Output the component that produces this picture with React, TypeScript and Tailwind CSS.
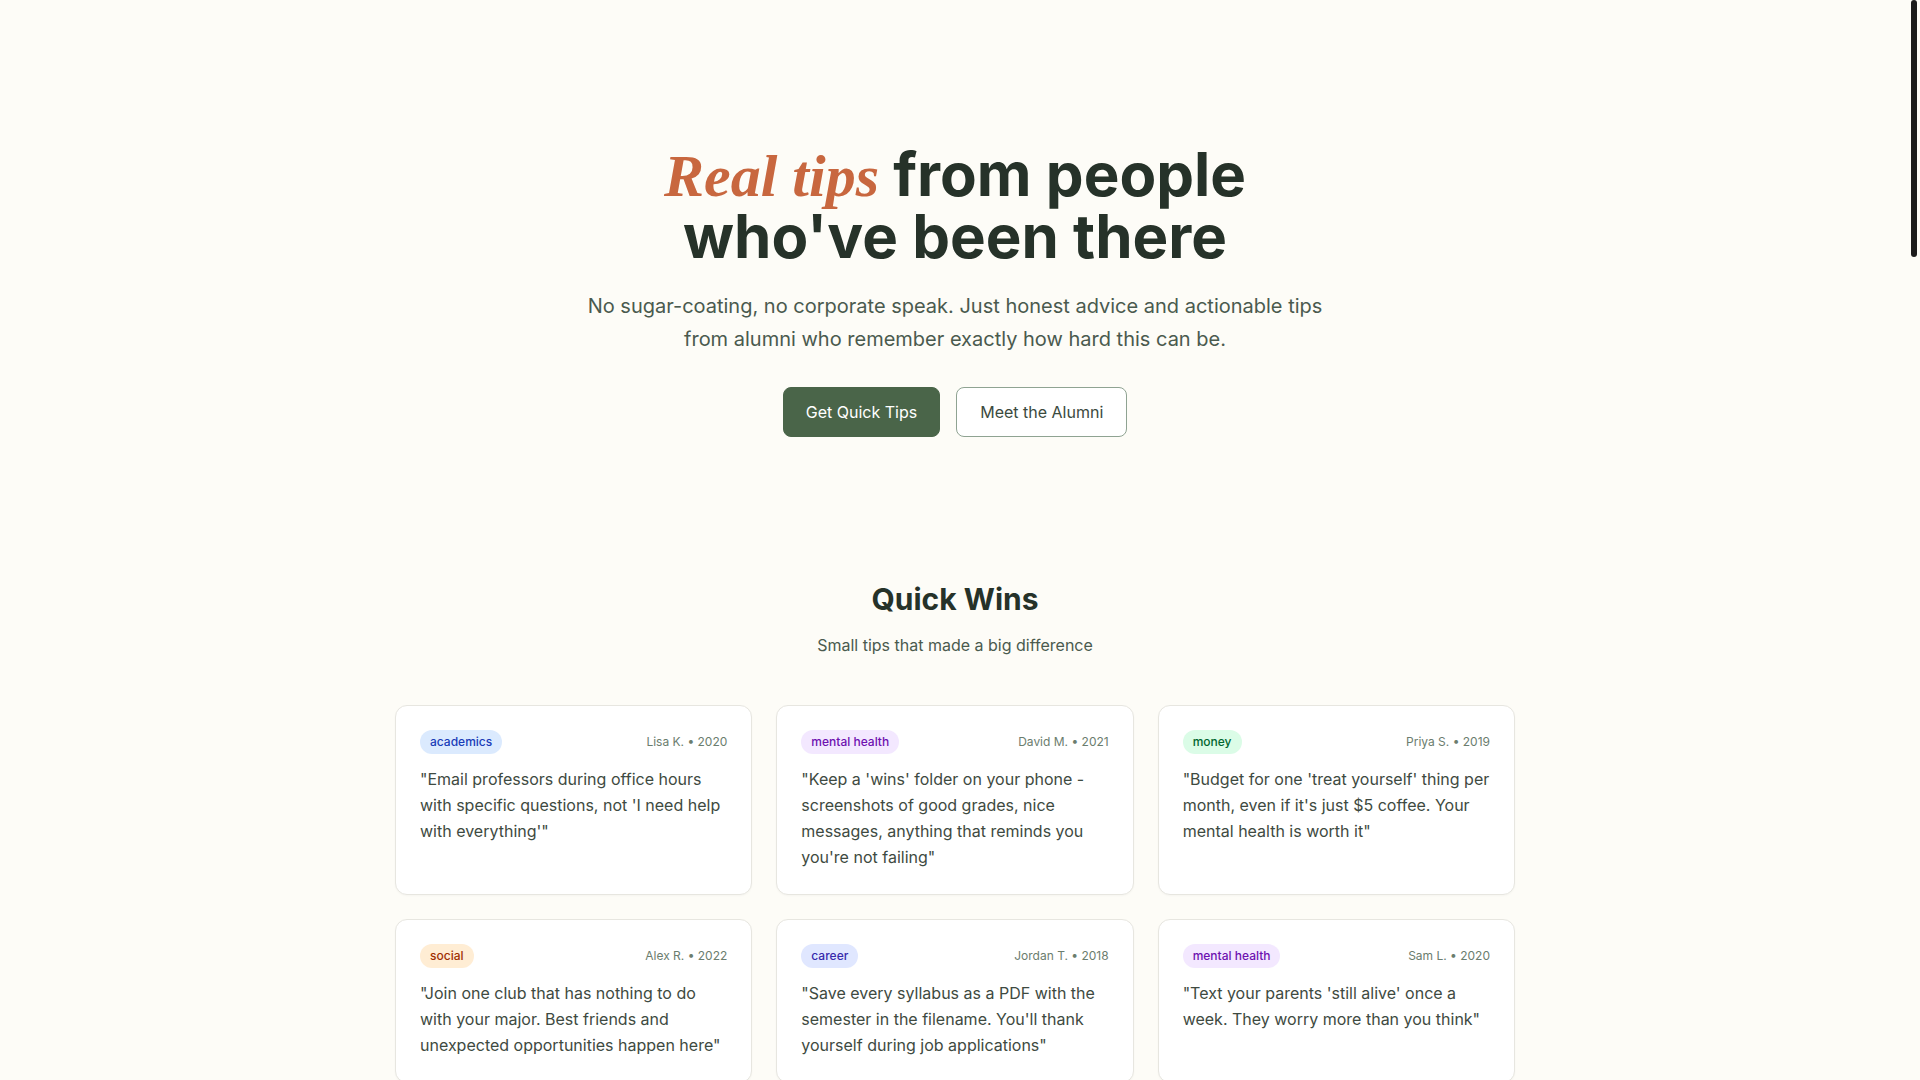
import React from 'react';

type Tip = {
  tag: string;
  author: string;
  year: number;
  text: string;
};

const tagStyles: Record<string, string> = {
  academics: 'bg-blue-100 text-blue-800',
  'mental health': 'bg-purple-100 text-purple-800',
  money: 'bg-green-100 text-green-800',
  social: 'bg-orange-100 text-orange-800',
  career: 'bg-indigo-100 text-indigo-800',
};

const tips: Tip[] = [
  {
    tag: 'academics',
    author: 'Lisa K.',
    year: 2020,
    text: "\"Email professors during office hours with specific questions, not 'I need help with everything'\"",
  },
  {
    tag: 'mental health',
    author: 'David M.',
    year: 2021,
    text: "\"Keep a 'wins' folder on your phone - screenshots of good grades, nice messages, anything that reminds you you're not failing\"",
  },
  {
    tag: 'money',
    author: 'Priya S.',
    year: 2019,
    text: "\"Budget for one 'treat yourself' thing per month, even if it's just $5 coffee. Your mental health is worth it\"",
  },
  {
    tag: 'social',
    author: 'Alex R.',
    year: 2022,
    text: '"Join one club that has nothing to do with your major. Best friends and unexpected opportunities happen here"',
  },
  {
    tag: 'career',
    author: 'Jordan T.',
    year: 2018,
    text: "\"Save every syllabus as a PDF with the semester in the filename. You'll thank yourself during job applications\"",
  },
  {
    tag: 'mental health',
    author: 'Sam L.',
    year: 2020,
    text: "\"Text your parents 'still alive' once a week. They worry more than you think\"",
  },
];

const alumni = [
  { name: 'Lisa K.', role: 'Biology, Class of 2020', blurb: 'Now a research assistant. Failed her first chem exam and lived to tell the tale.' },
  { name: 'David M.', role: 'Computer Science, Class of 2021', blurb: 'Software engineer who learned the hard way that sleep is not optional.' },
  { name: 'Priya S.', role: 'Economics, Class of 2019', blurb: 'Financial analyst and former ramen-only budget expert.' },
  { name: 'Alex R.', role: 'Film Studies, Class of 2022', blurb: 'Freelance editor. Found his people in the hiking club.' },
  { name: 'Jordan T.', role: 'Marketing, Class of 2018', blurb: 'Brand manager who wishes he had kept better records.' },
  { name: 'Sam L.', role: 'Psychology, Class of 2020', blurb: 'Counselor helping students through the same things she went through.' },
];

function TipCard({ tip }: { tip: Tip }) {
  return (
    <div className="bg-white border border-[#e7e6e0] rounded-xl p-6 shadow-[0_1px_2px_rgba(0,0,0,0.03)]">
      <div className="flex items-center justify-between mb-3">
        <span className={`px-2.5 py-1 rounded-full text-xs font-medium ${tagStyles[tip.tag]}`}>{tip.tag}</span>
        <span className="text-xs text-[#6b7d6e]">
          {tip.author} • {tip.year}
        </span>
      </div>
      <p className="text-base leading-relaxed text-[#3e4a41]">{tip.text}</p>
    </div>
  );
}

export default function App() {
  return (
    <div className="min-h-screen pr-[10px] bg-[#fdfcf7] font-['Inter','Liberation_Sans',sans-serif] text-[#263229]">
      {/* scrollbar as drawn in the screenshot */}
      <div className="fixed top-0 right-0 w-[10px] h-screen bg-[#fdfcf7]">
        <div className="ml-[1px] w-[6px] h-[257px] rounded-full bg-[#1c1c1c]" />
      </div>

      <section className="px-4 pt-36 pb-20 text-center">
        <div className="max-w-4xl mx-auto">
          <h1 className="text-6xl font-bold leading-none text-[#263229] mb-6">
            <span className="font-['Liberation_Serif','Times_New_Roman',serif] italic text-[#c8673f]">Real tips</span> from people
            <br />
            who've been there
          </h1>
          <p className="text-xl leading-relaxed text-[#4a5a4e] max-w-3xl mx-auto mb-8">
            No sugar-coating, no corporate speak. Just honest advice and actionable tips from alumni who remember exactly how hard this can be.
          </p>
          <div className="flex justify-center gap-4">
            <button className="px-[22px] py-3 rounded-lg bg-[#4a6549] text-white text-base border border-[#4a6549]">Get Quick Tips</button>
            <button className="px-[23px] py-3 rounded-lg bg-white text-[#3b4a3e] text-base border border-[#8fa392]">Meet the Alumni</button>
          </div>
        </div>
      </section>

      <section className="pt-16 pb-20">
        <div className="max-w-6xl mx-auto px-4">
          <h2 className="text-3xl font-bold text-center text-[#263229] mb-4">Quick Wins</h2>
          <p className="text-base text-center text-[#4a5a4e] mb-12">Small tips that made a big difference</p>
          <div className="grid grid-cols-3 gap-6">
            {tips.map((tip) => (
              <TipCard key={tip.author} tip={tip} />
            ))}
          </div>
        </div>
      </section>

      <section className="py-20">
        <div className="max-w-6xl mx-auto px-4">
          <h2 className="text-3xl font-bold text-center mb-4">Meet the Alumni</h2>
          <p className="text-base text-center text-[#4a5a4e] mb-12">The people behind the advice</p>
          <div className="grid grid-cols-3 gap-6">
            {alumni.map((a) => (
              <div key={a.name} className="bg-white border border-[#e7e6e0] rounded-xl p-6">
                <div className="flex items-center gap-4 mb-4">
                  <div className="w-14 h-14 rounded-full bg-[#e4ebe3] flex items-center justify-center text-lg font-semibold text-[#4a6549]">
                    {a.name.charAt(0)}
                  </div>
                  <div>
                    <div className="font-semibold">{a.name}</div>
                    <div className="text-sm text-[#6b7d6e]">{a.role}</div>
                  </div>
                </div>
                <p className="text-base leading-relaxed text-[#3e4a41] mb-20">{a.blurb}</p>
              </div>
            ))}
          </div>
        </div>
      </section>

      <section className="px-4 py-20">
        <div className="max-w-3xl mx-auto">
          <h2 className="text-3xl font-bold text-center mb-4">Deep Dives</h2>
          <p className="text-base text-center text-[#4a5a4e] mb-12">Longer stories for when you need more than a quick tip</p>
          <div className="flex flex-col gap-6">
            {['Surviving your first semester', 'When your major stops feeling right', 'Making friends after freshman year', 'Landing the first internship', 'Handling burnout before finals'].map((t) => (
              <div key={t} className="bg-white border border-[#e7e6e0] rounded-xl p-8 h-56">
                <h3 className="text-xl font-semibold mb-3">{t}</h3>
                <p className="text-base leading-relaxed text-[#3e4a41]">
                  An honest look at what it was really like, what helped, and what we wish someone had told us sooner.
                </p>
              </div>
            ))}
          </div>
        </div>
      </section>

      <footer className="px-4 py-16 border-t border-[#e7e6e0] text-center text-sm text-[#6b7d6e]">
        Made with care by alumni who've been there.
      </footer>
    </div>
  );
}
